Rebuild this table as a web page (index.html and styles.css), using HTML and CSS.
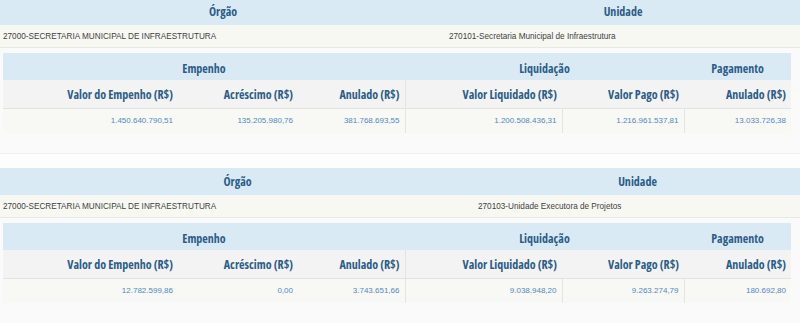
FILE: index.html
```html
<!DOCTYPE html>
<html lang="pt-BR">
<head>
<meta charset="utf-8">
<title>Execução</title>
<link rel="stylesheet" href="styles.css">
</head>
<body>
<div class="section">
  <table class="info">
    <colgroup><col class="org-a"><col></colgroup>
    <tr class="info-hdr"><th>Órgão</th><th>Unidade</th></tr>
    <tr class="info-val"><td>27000-SECRETARIA MUNICIPAL DE INFRAESTRUTURA</td><td>270101-Secretaria Municipal de Infraestrutura</td></tr>
  </table>
  <div class="wrap">
    <table class="fin">
      <colgroup><col class="w1"><col class="w2"><col class="w3"><col class="w4"><col class="w5"><col class="w6"></colgroup>
      <tr class="grp"><th colspan="3">Empenho</th><th colspan="2">Liquidação</th><th>Pagamento</th></tr>
      <tr class="sub"><th>Valor do Empenho (R$)</th><th>Acréscimo (R$)</th><th>Anulado (R$)</th><th class="bl">Valor Liquidado (R$)</th><th>Valor Pago (R$)</th><th>Anulado (R$)</th></tr>
      <tr class="dat"><td>1.450.640.790,51</td><td>135.205.980,76</td><td>381.768.693,55</td><td class="bl">1.200.508.436,31</td><td class="bl">1.216.961.537,81</td><td class="bl">13.033.726,38</td></tr>
    </table>
  </div>
</div>
<div class="section">
  <table class="info">
    <colgroup><col class="org-b"><col></colgroup>
    <tr class="info-hdr"><th>Órgão</th><th>Unidade</th></tr>
    <tr class="info-val"><td>27000-SECRETARIA MUNICIPAL DE INFRAESTRUTURA</td><td>270103-Unidade Executora de Projetos</td></tr>
  </table>
  <div class="wrap">
    <table class="fin">
      <colgroup><col class="w1"><col class="w2"><col class="w3"><col class="w4"><col class="w5"><col class="w6"></colgroup>
      <tr class="grp"><th colspan="3">Empenho</th><th colspan="2">Liquidação</th><th>Pagamento</th></tr>
      <tr class="sub"><th>Valor do Empenho (R$)</th><th>Acréscimo (R$)</th><th>Anulado (R$)</th><th class="bl">Valor Liquidado (R$)</th><th>Valor Pago (R$)</th><th>Anulado (R$)</th></tr>
      <tr class="dat"><td>12.782.599,86</td><td>0,00</td><td>3.743.651,66</td><td class="bl">9.038.948,20</td><td class="bl">9.263.274,79</td><td class="bl">180.692,80</td></tr>
    </table>
  </div>
</div>
</body>
</html>
```
FILE: styles.css
```css
html, body {
  margin: 0;
  padding: 0;
  background: #fdfdfd;
}
body {
  width: 800px;
  margin-top: -2px;
  font-family: "Liberation Sans", Arial, sans-serif;
  font-size: 8px;
  color: #444;
}
table {
  border-collapse: collapse;
  border-spacing: 0;
  table-layout: fixed;
}
th, td {
  padding: 0;
}
.section {
  margin-bottom: 14px;
}
.info {
  width: 800px;
}
.org-a { width: 446px; }
.org-b { width: 475px; }
.info-hdr th {
  height: 27px;
  background: #d9eaf5;
  color: #2c5d88;
  font-family: "Open Sans", "DejaVu Sans", sans-serif;
  font-weight: 700;
  font-size: 12px;
  font-stretch: 87.5%;
  text-align: center;
  vertical-align: middle;
}
.info-val td {
  height: 22px;
  background: #f8f8f3;
  padding-left: 3px;
  font-size: 8.2px;
  color: #3f3f3f;
  vertical-align: middle;
  border-bottom: 1px solid #e8e8e4;
  white-space: nowrap;
}
.wrap {
  background: #fafafa;
  padding: 5px 9px 20px 3px;
  border-bottom: 1px solid #eeeeee;
}
.fin {
  width: 788px;
}
.w1 { width: 175px; }
.w2 { width: 120px; }
.w3 { width: 107px; }
.w4 { width: 157px; }
.w5 { width: 122px; }
.w6 { width: 107px; }
.fin th {
  font-family: "Open Sans", "DejaVu Sans", sans-serif;
  font-weight: 700;
  font-size: 12px;
  font-stretch: 87.5%;
  color: #2c5d88;
  white-space: nowrap;
}
.grp th {
  height: 24px;
  padding-top: 3px;
  background: #d9eaf5;
  text-align: center;
  vertical-align: middle;
}
.sub th {
  height: 28px;
  background: #f3f3f3;
  text-align: right;
  padding-right: 5px;
  vertical-align: middle;
  border-bottom: 1px solid #e2e2e2;
}
.dat td {
  height: 23px;
  padding-bottom: 1px;
  background: #f8f8f5;
  text-align: right;
  padding-right: 5px;
  color: #5089c2;
  vertical-align: middle;
  white-space: nowrap;
}
.sub .bl, .dat .bl {
  border-left: 1px solid #e4e4e4;
}
```
